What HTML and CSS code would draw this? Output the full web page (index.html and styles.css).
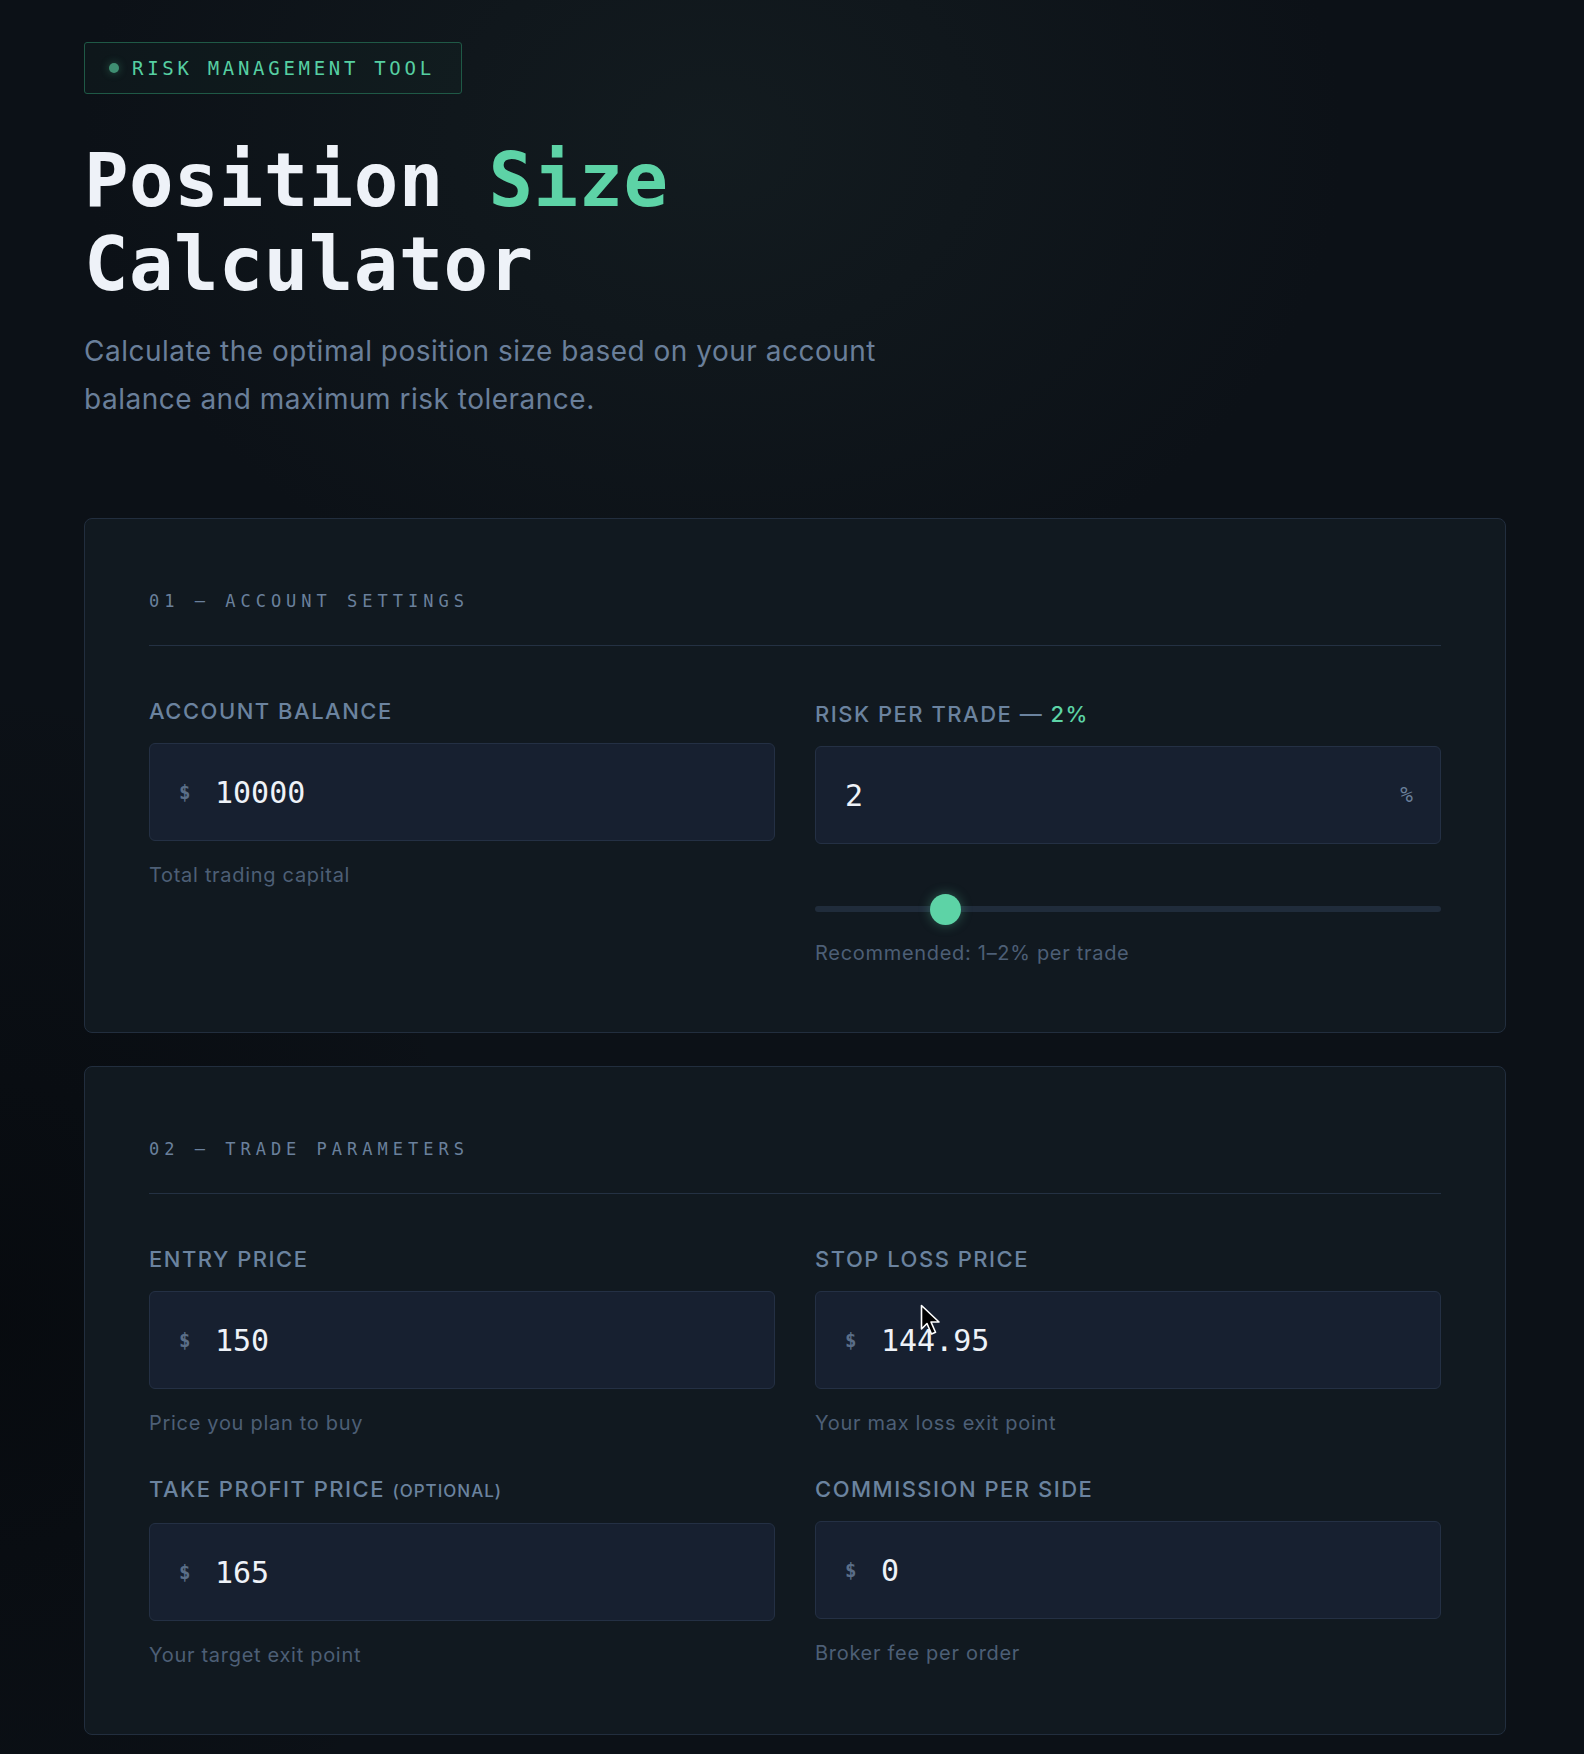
FILE: index.html
```html
<!DOCTYPE html>
<html lang="en">
<head>
<meta charset="utf-8">
<title>Position Size Calculator</title>
<link rel="stylesheet" href="styles.css">
</head>
<body>
<main class="page">
  <header class="hero">
    <div class="badge"><span class="badge-dot"></span>RISK MANAGEMENT TOOL</div>
    <h1 class="title">Position <span class="accent">Size</span><br>Calculator</h1>
    <p class="subtitle">Calculate the optimal position size based on your account balance and maximum risk tolerance.</p>
  </header>

  <section class="card card-first">
    <div class="card-head">01 — ACCOUNT SETTINGS</div>
    <div class="grid">
      <div class="field">
        <div class="label">ACCOUNT BALANCE</div>
        <div class="input"><span class="prefix">$</span><span class="value">10000</span></div>
        <div class="hint">Total trading capital</div>
      </div>
      <div class="field field-risk">
        <div class="label">RISK PER TRADE — <span class="label-accent">2%</span></div>
        <div class="input input-plain"><span class="value">2</span><span class="suffix">%</span></div>
        <div class="slider"><div class="track"></div><div class="thumb" style="left: 18.3%"></div></div>
        <div class="hint hint-tight">Recommended: 1–2% per trade</div>
      </div>
    </div>
  </section>

  <section class="card">
    <div class="card-head">02 — TRADE PARAMETERS</div>
    <div class="grid">
      <div class="field">
        <div class="label">ENTRY PRICE</div>
        <div class="input"><span class="prefix">$</span><span class="value">150</span></div>
        <div class="hint">Price you plan to buy</div>
      </div>
      <div class="field field-cursor">
        <div class="label">STOP LOSS PRICE</div>
        <div class="input"><span class="prefix">$</span><span class="value">144.95</span></div>
        <div class="hint">Your max loss exit point</div>
        <svg class="cursor" width="22" height="34" viewBox="0 0 22 34"><path d="M1.5 1.5 L1.5 25 L7 19.5 L11.5 30 L15.5 28.2 L11 18 L19 18 Z" fill="#000" stroke="#fff" stroke-width="1.6" stroke-linejoin="round"/></svg>
      </div>
      <div class="field">
        <div class="label">TAKE PROFIT PRICE <span class="label-small">(OPTIONAL)</span></div>
        <div class="input"><span class="prefix">$</span><span class="value">165</span></div>
        <div class="hint">Your target exit point</div>
      </div>
      <div class="field">
        <div class="label">COMMISSION PER SIDE</div>
        <div class="input"><span class="prefix">$</span><span class="value">0</span></div>
        <div class="hint">Broker fee per order</div>
      </div>
    </div>
  </section>
</main>
</body>
</html>
```

FILE: styles.css
```css
* { box-sizing: border-box; }

html, body {
  margin: 0;
  padding: 0;
}

body {
  min-height: 1754px;
  background:
    radial-gradient(ellipse 900px 700px at 45% 8%, rgba(20, 29, 33, 0.85), rgba(20, 29, 33, 0) 70%),
    radial-gradient(ellipse 700px 900px at 0% 75%, rgba(6, 9, 13, 0.8), rgba(6, 9, 13, 0) 70%),
    #0c1117;
  color: #e9eef5;
  font-family: Inter, "Noto Sans", sans-serif;
}

.page {
  width: 1422px;
  margin-left: 84px;
  padding-top: 42px;
  padding-bottom: 20px;
}

.badge {
  display: inline-flex;
  align-items: center;
  height: 52px;
  padding: 0 26px 0 24px;
  border: 1.5px solid #1f5946;
  border-radius: 3px;
  background: rgba(20, 44, 40, 0.25);
  font-family: "DejaVu Sans Mono", "Liberation Mono", monospace;
  font-size: 19px;
  letter-spacing: 3.7px;
  color: #56cfa2;
}

.badge-dot {
  width: 10px;
  height: 10px;
  border-radius: 50%;
  background: #3f8f72;
  box-shadow: 0 0 8px rgba(70, 170, 130, 0.45);
  margin-right: 13px;
}

.title {
  margin: 44px 0 0 0;
  font-family: "DejaVu Sans Mono", "Liberation Mono", monospace;
  font-weight: 700;
  font-size: 74px;
  line-height: 84px;
  letter-spacing: 0.4px;
  color: #eef2f8;
}

.accent { color: #5dd3a6; }

.subtitle {
  margin: 21px 0 0 0;
  width: 840px;
  font-size: 28px;
  line-height: 48px;
  letter-spacing: 0.5px;
  color: #6a7f9a;
  font-weight: 400;
}

.card {
  margin-top: 33px;
  border: 1px solid #222e3e;
  border-radius: 8px;
  background: #111920;
  padding: 64px 64px 67px 64px;
}

.card-first { margin-top: 95px; }

.card-head {
  margin-top: 2px;
  font-family: "DejaVu Sans Mono", "Liberation Mono", monospace;
  font-size: 17px;
  line-height: 32px;
  letter-spacing: 5px;
  color: #6a809c;
  padding-bottom: 28px;
  border-bottom: 1px solid #243143;
  margin-bottom: 52px;
}

.grid {
  display: grid;
  grid-template-columns: 1fr 1fr;
  column-gap: 40px;
  row-gap: 41px;
}

.field { position: relative; }

.field-risk { padding-top: 3px; }

.label {
  font-size: 22px;
  line-height: 26px;
  font-weight: 500;
  letter-spacing: 1.5px;
  color: #6b839f;
  margin-bottom: 19px;
}

.label-accent {
  color: #5dd3a6;
}

.label-small {
  font-size: 17px;
  letter-spacing: 1px;
}

.input {
  height: 98px;
  display: flex;
  align-items: center;
  padding: 0 27px 0 29px;
  border: 1px solid #243044;
  border-radius: 6px;
  background: #172030;
}

.prefix {
  font-family: "DejaVu Sans Mono", "Liberation Mono", monospace;
  font-weight: 700;
  font-size: 19px;
  color: #5a6e88;
  width: 12px;
  margin-right: 24px;
}

.value {
  font-family: "DejaVu Sans Mono", "Liberation Mono", monospace;
  font-size: 30px;
  color: #eef2f8;
  flex: 1;
}

.suffix {
  font-family: "DejaVu Sans Mono", "Liberation Mono", monospace;
  font-size: 21px;
  color: #6a7f9a;
}

.hint {
  margin-top: 22px;
  font-size: 20px;
  line-height: 24px;
  letter-spacing: 0.7px;
  color: #4d5f76;
}

.hint-tight { margin-top: 17px; }

.slider {
  position: relative;
  margin-top: 50px;
  height: 30px;
}

.track {
  position: absolute;
  left: 0;
  right: 0;
  top: 12px;
  height: 6px;
  border-radius: 3px;
  background: #202c3b;
}

.thumb {
  position: absolute;
  top: 0;
  width: 31px;
  height: 31px;
  border-radius: 50%;
  background: #5dd3a6;
  box-shadow: 0 0 12px rgba(93, 211, 166, 0.35);
}

.cursor {
  position: absolute;
  left: 105px;
  top: 58px;
}
```
